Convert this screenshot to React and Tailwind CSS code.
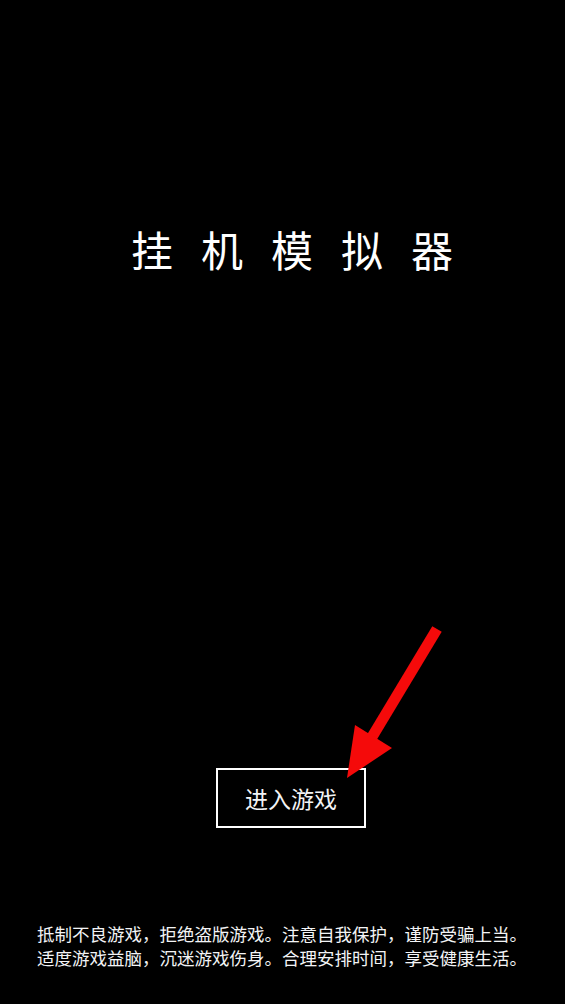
import React from 'react';

const cjk = { fontFamily: '"Noto Sans CJK SC", "Noto Sans", sans-serif' };

function Arrow() {
	return (
		<svg className="absolute left-0 top-0 pointer-events-none" width="565" height="1004" viewBox="0 0 565 1004">
			<line x1="437" y1="629" x2="372" y2="737" stroke="#f50a0a" strokeWidth="11" strokeLinecap="butt" />
			<polygon points="347,778 355,725 392,748" fill="#f50a0a" />
		</svg>
	);
}

export default function App() {
	return (
		<div className="relative w-[565px] h-[1004px] bg-black text-white overflow-hidden" style={cjk}>
			<div className="flex flex-col h-full">
				<h1 className="mt-[225px] pl-[131px] text-[42px] leading-[48px] tracking-[28px] font-normal whitespace-nowrap">
					挂机模拟器
				</h1>
				<div className="mt-[495px] ml-[216px]">
					<button className="w-[150px] h-[60px] border-2 border-white flex items-center justify-center text-[23px] text-gray-100">
						进入游戏
					</button>
				</div>
				<div className="mt-[94px] pl-[37px] text-[17.5px] leading-[24px] text-gray-100 whitespace-nowrap">
					<p>抵制不良游戏，拒绝盗版游戏。注意自我保护，谨防受骗上当。</p>
					<p>适度游戏益脑，沉迷游戏伤身。合理安排时间，享受健康生活。</p>
				</div>
			</div>
			<Arrow />
		</div>
	);
}
